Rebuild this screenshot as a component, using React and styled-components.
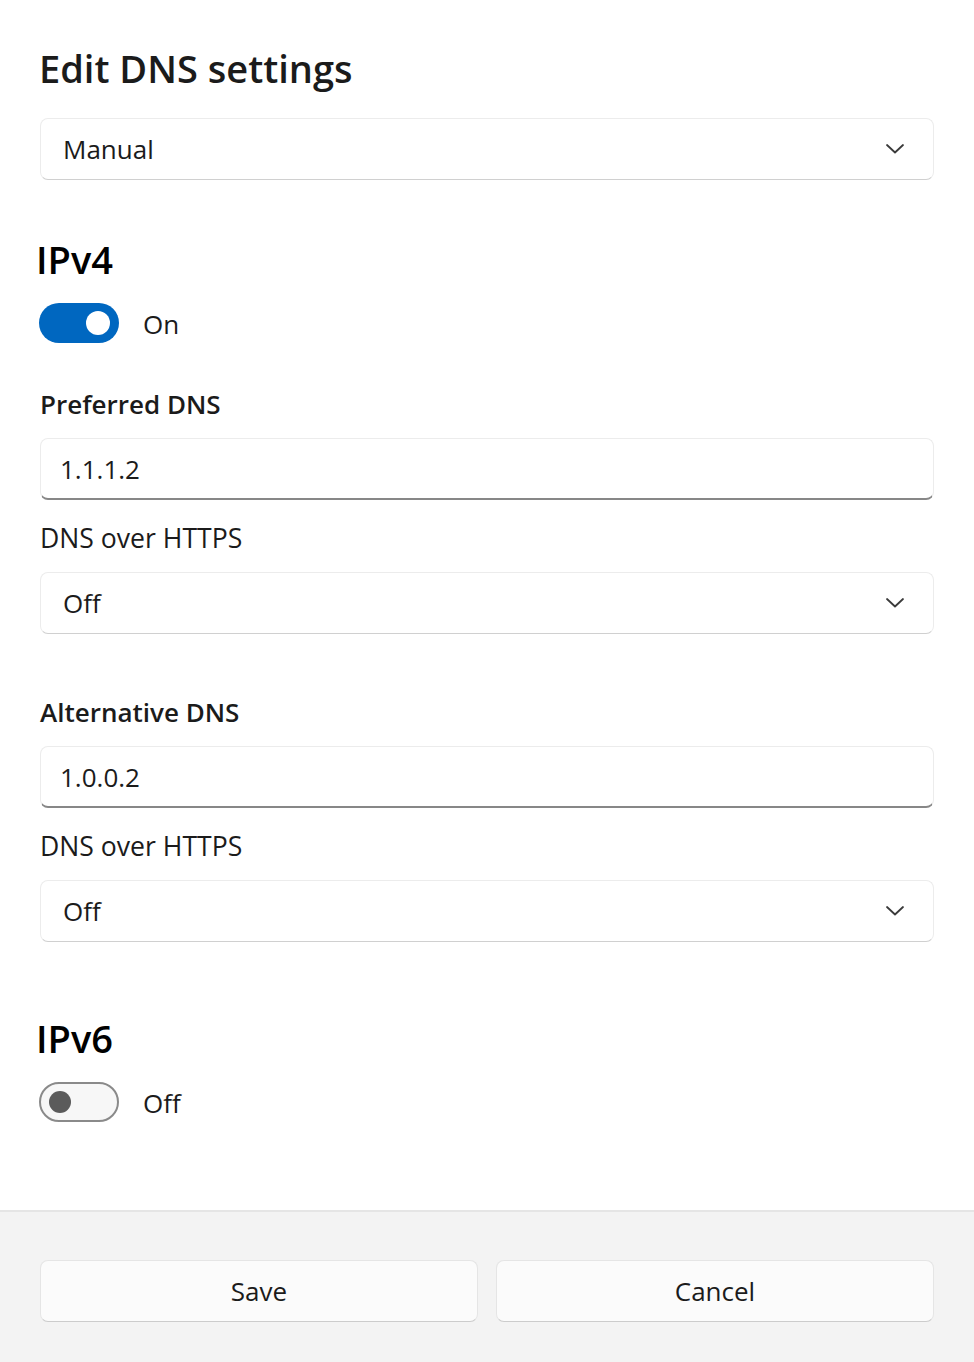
import React from "react";
import styled, { createGlobalStyle } from "styled-components";

const Global = createGlobalStyle`
  html, body { margin: 0; padding: 0; background: #ffffff; }
  body { font-family: "Segoe UI", "Open Sans", "Noto Sans", sans-serif; color: #1b1b1b; }
  * { box-sizing: border-box; }
`;

const Page = styled.div`
  width: 974px;
  height: 1362px;
  display: flex;
  flex-direction: column;
  background: #ffffff;
`;

const Body = styled.div`
  flex: 1;
  display: flex;
  flex-direction: column;
  padding: 40px 40px 0 40px;
`;

const Title = styled.h1`
  margin: 0 0 22px -1px;
  font-size: 38px;
  font-weight: 600;
  line-height: 56px;
  color: #1b1b1b;
`;

const SectionHeading = styled.h2`
  margin: ${(p) => p.$top}px 0 16px -4px;
  font-size: 38px;
  font-weight: 600;
  line-height: 56px;
  color: #000;
`;

const Label = styled.div`
  margin: ${(p) => p.$top}px 0 14px 0;
  font-size: ${(p) => (p.$strong ? 26 : 26.6)}px;
  font-weight: ${(p) => (p.$strong ? 600 : 400)};
  line-height: 40px;
  color: #1b1b1b;
`;

const Select = styled.div`
  height: 62px;
  display: flex;
  align-items: center;
  justify-content: space-between;
  padding: 0 28px 0 22px;
  background: #ffffff;
  border: 1px solid #ececec;
  border-bottom-color: #d0d0d0;
  border-radius: 8px;
  font-size: 26px;
  color: #1b1b1b;
`;

const Input = styled.div`
  height: 62px;
  display: flex;
  align-items: center;
  padding: 0 19px;
  background: #ffffff;
  border: 1px solid #ececec;
  border-bottom: 2px solid #878787;
  border-radius: 8px;
  font-size: 26px;
  color: #1b1b1b;
`;

const ToggleRow = styled.div`
  display: flex;
  align-items: center;
  gap: 24px;
  margin-left: -1px;
  font-size: 26px;
  line-height: 40px;
  color: #1b1b1b;

  & > span {
    position: relative;
    top: 1px;
  }
`;

const Track = styled.div`
  width: 80px;
  height: 40px;
  border-radius: 20px;
  display: flex;
  align-items: center;
  padding: 0 ${(p) => (p.$on ? 9 : 8)}px;
  justify-content: ${(p) => (p.$on ? "flex-end" : "flex-start")};
  background: ${(p) => (p.$on ? "#0067c0" : "#f7f7f7")};
  border: ${(p) => (p.$on ? "none" : "2px solid #8a8a8a")};
`;

const Knob = styled.div`
  width: ${(p) => (p.$on ? 24 : 22)}px;
  height: ${(p) => (p.$on ? 24 : 22)}px;
  border-radius: 50%;
  background: ${(p) => (p.$on ? "#ffffff" : "#5b5b5b")};
`;

const Footer = styled.div`
  height: 152px;
  background: #f3f3f3;
  border-top: 2px solid #e5e5e5;
  display: grid;
  grid-template-columns: 1fr 1fr;
  gap: 18px;
  padding: 48px 40px 40px 40px;
`;

const Button = styled.div`
  height: 62px;
  display: flex;
  align-items: center;
  justify-content: center;
  background: #fbfbfb;
  border: 1px solid #e5e5e5;
  border-bottom-color: #cccccc;
  border-radius: 8px;
  font-size: 26px;
  color: #1b1b1b;
`;

const Chevron = () => (
  <svg width="20" height="12" viewBox="0 0 20 12" fill="none">
    <path d="M2 2 L10 9.5 L18 2" stroke="#3a3a3a" strokeWidth="1.8" strokeLinecap="round" strokeLinejoin="round" />
  </svg>
);

const Dropdown = ({ value }) => (
  <Select>
    <span>{value}</span>
    <Chevron />
  </Select>
);

const Toggle = ({ on, text }) => (
  <ToggleRow>
    <Track $on={on}>
      <Knob $on={on} />
    </Track>
    <span>{text}</span>
  </ToggleRow>
);

export default function App() {
  return (
    <Page>
      <Global />
      <Body>
        <Title>Edit DNS settings</Title>
        <Dropdown value="Manual" />

        <SectionHeading $top={51}>IPv4</SectionHeading>
        <Toggle on text="On" />

        <Label $strong $top={41}>Preferred DNS</Label>
        <Input>1.1.1.2</Input>
        <Label $top={18}>DNS over HTTPS</Label>
        <Dropdown value="Off" />

        <Label $strong $top={58}>Alternative DNS</Label>
        <Input>1.0.0.2</Input>
        <Label $top={18}>DNS over HTTPS</Label>
        <Dropdown value="Off" />

        <SectionHeading $top={68}>IPv6</SectionHeading>
        <Toggle on={false} text="Off" />
      </Body>
      <Footer>
        <Button>Save</Button>
        <Button>Cancel</Button>
      </Footer>
    </Page>
  );
}
